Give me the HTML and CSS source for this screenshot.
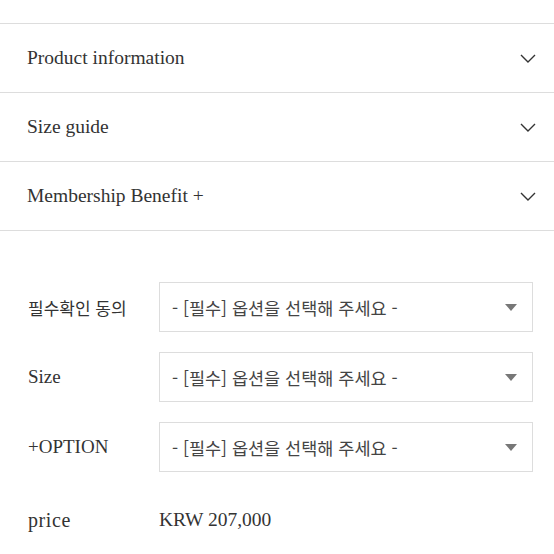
FILE: index.html
```html
<!DOCTYPE html>
<html lang="ko">
<head>
    <meta charset="UTF-8">
    <meta name="viewport" content="width=device-width, initial-scale=1.0">
    <title>Product detail</title>
    <link rel="stylesheet" href="styles.css">
</head>
<body>
    <div class="accordion">
        <div class="acc-item">
            <span class="acc-title">Product information</span>
            <svg class="chevron" width="16" height="9" viewBox="0 0 16 9"><path d="M1 1l7 7 7-7" fill="none" stroke="#333" stroke-width="1.4"/></svg>
        </div>
        <div class="acc-item">
            <span class="acc-title">Size guide</span>
            <svg class="chevron" width="16" height="9" viewBox="0 0 16 9"><path d="M1 1l7 7 7-7" fill="none" stroke="#333" stroke-width="1.4"/></svg>
        </div>
        <div class="acc-item">
            <span class="acc-title">Membership Benefit +</span>
            <svg class="chevron" width="16" height="9" viewBox="0 0 16 9"><path d="M1 1l7 7 7-7" fill="none" stroke="#333" stroke-width="1.4"/></svg>
        </div>
    </div>

    <div class="options">
        <div class="opt-row">
            <span class="opt-label ko">필수확인 동의</span>
            <div class="select">
                <span>- [필수] 옵션을 선택해 주세요 -</span>
                <span class="arrow"></span>
            </div>
        </div>
        <div class="opt-row">
            <span class="opt-label">Size</span>
            <div class="select">
                <span>- [필수] 옵션을 선택해 주세요 -</span>
                <span class="arrow"></span>
            </div>
        </div>
        <div class="opt-row">
            <span class="opt-label">+OPTION</span>
            <div class="select">
                <span>- [필수] 옵션을 선택해 주세요 -</span>
                <span class="arrow"></span>
            </div>
        </div>
        <div class="opt-row price-row">
            <span class="opt-label price-label">price</span>
            <span class="price">KRW 207,000</span>
        </div>
    </div>
</body>
</html>
```

FILE: styles.css
```css
body {
    margin: 0;
    background-color: #fff;
    color: #333;
    font-family: 'Liberation Serif', serif;
}

.accordion {
    padding-top: 23px;
}

.acc-item {
    display: flex;
    align-items: center;
    justify-content: space-between;
    height: 68px;
    border-top: 1px solid #ddd;
    padding: 0 18px 0 27px;
}

.acc-item:last-child {
    border-bottom: 1px solid #ddd;
}

.acc-title {
    font-size: 19.5px;
    color: #333;
}

.chevron {
    display: block;
}

.options {
    padding: 51px 21px 0 28px;
    display: flex;
    flex-direction: column;
    gap: 20px;
}

.opt-row {
    display: flex;
    align-items: center;
}

.opt-label {
    width: 131px;
    font-size: 19px;
    color: #333;
}

.opt-label.ko {
    font-family: 'Noto Sans CJK KR', sans-serif;
    font-size: 17px;
}

.price-label {
    font-size: 20px;
    letter-spacing: 0.6px;
}

.select {
    flex: 1;
    height: 48px;
    border: 1px solid #ddd;
    display: flex;
    align-items: center;
    justify-content: space-between;
    padding: 0 15px 0 12px;
    font-family: 'Noto Sans CJK KR', sans-serif;
    font-size: 17.5px;
    color: #444;
}

.arrow {
    width: 0;
    height: 0;
    border-left: 6.5px solid transparent;
    border-right: 6.5px solid transparent;
    border-top: 7px solid #777;
}

.price-row {
    height: 50px;
    padding-top: 3px;
}

.price {
    font-size: 19.5px;
    color: #333;
}
```
